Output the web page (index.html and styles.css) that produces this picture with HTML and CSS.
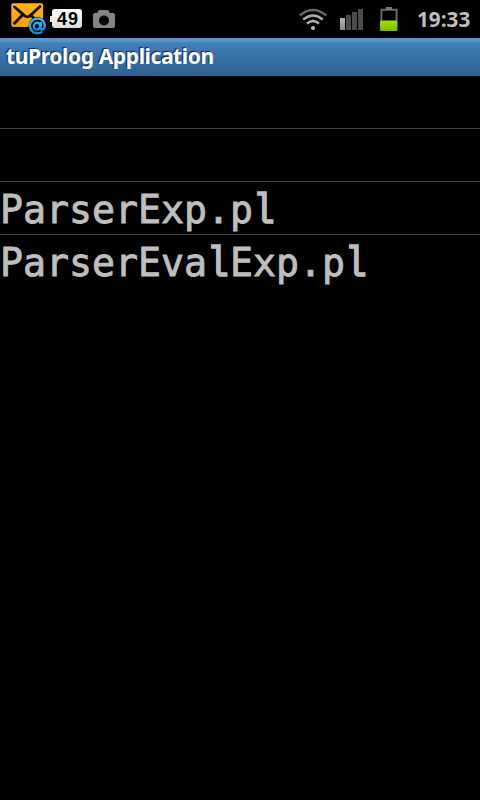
FILE: index.html
```html
<!DOCTYPE html>
<html lang="en">
<head>
<meta charset="utf-8">
<title>tuProlog Application</title>
<link rel="stylesheet" href="styles.css">
</head>
<body>
<header class="status">
  <svg class="mail" width="38" height="36" viewBox="0 0 38 36">
    <defs>
      <linearGradient id="env" x1="0" y1="0" x2="0" y2="1"><stop offset="0" stop-color="#ffb51c"/><stop offset="1" stop-color="#f79a0c"/></linearGradient>
      <linearGradient id="at" x1="0" y1="0" x2="0" y2="1"><stop offset="0" stop-color="#45b2f5"/><stop offset="1" stop-color="#1786d8"/></linearGradient>
    </defs>
    <rect x="1.3" y="3.3" width="31.8" height="23.6" rx="2" fill="url(#env)"/>
    <path d="M4.500 7L14 15.200Q17.500 18.500 20.500 15.200L30 6.500M12.500 15L4.500 23.300M20.500 15L27 21" fill="none" stroke="#151008" stroke-width="2.900" stroke-linecap="round"/>
    <circle cx="27.500" cy="25.900" r="8.900" fill="#02080d"/>
    <g fill="none" stroke="url(#at)" stroke-width="2.400" stroke-linecap="round">
      <path d="M31.500 32.200Q29.500 33.300 27 33.200A7 7 0 0 1 20 26A7.500 7.500 0 0 1 27.800 18.600A6.900 6.900 0 0 1 34.800 25.300C34.800 28 33.200 29.500 31.800 29.500Q30 29.500 30.400 27.200L31 23"/>
      <ellipse cx="27" cy="26.100" rx="3.100" ry="3.500" transform="rotate(20 27 26)"/>
    </g>
  </svg>
  <span class="level">49</span>
  <svg class="camera" width="24" height="20" viewBox="0 0 24 20">
    <path fill="#858585" fill-rule="evenodd" d="M7 1h9l2 3h3q2 0 2 2v11q0 2-2 2H3q-2 0-2-2V6q0-2 2-2h2zM12 6.500a5 5 0 1 0 0 10a5 5 0 0 0 0-10z"/>
  </svg>
  <span class="gap"></span>
  <svg class="wifi" width="30" height="24" viewBox="0 0 30 24" fill="none" stroke-width="2.300" stroke-linecap="butt">
    <path d="M1.700 7.400Q15-3.500 28.300 7.400" stroke="#666"/>
    <path d="M5.200 11.500Q15 3.500 24.800 11.500" stroke="#aaa"/>
    <path d="M9 15.600Q15 10.500 21 15.600" stroke="#b8b8b8"/>
    <circle cx="15" cy="20" r="2.100" fill="#b8b8b8"/>
  </svg>
  <svg class="signal" width="24" height="22" viewBox="0 0 24 22">
    <defs><linearGradient id="bar" x1="0" y1="0" x2="0" y2="1"><stop offset="0" stop-color="#b5b5b5"/><stop offset="1" stop-color="#888"/></linearGradient></defs>
    <path fill="url(#bar)" d="M0 9h5v12H0z"/>
    <path fill="#4b4b4b" d="M6 6h5v15H6zM12 3h5v18h-5zM18 0h5v21h-5z"/>
  </svg>
  <svg class="battery" width="20" height="26" viewBox="0 0 20 26">
    <defs><linearGradient id="charge" x1="0" y1="0" x2="0" y2="1"><stop offset="0" stop-color="#a2df00"/><stop offset="1" stop-color="#79ba00"/></linearGradient></defs>
    <path d="M2.400 15V3.800H17.600V15" fill="none" stroke="#6c6c6c" stroke-width="1.900"/>
    <path fill="#777" d="M7 1h6v3H7z"/>
    <rect x="1" y="14.500" width="17.500" height="10.500" rx="1.500" fill="url(#charge)"/>
  </svg>
  <time class="clock">19:33</time>
</header>
<h1 class="title">tuProlog Application</h1>
<ul class="files">
  <li></li>
  <li></li>
  <li>ParserExp.p<span class="slab">l</span></li>
  <li>ParserEva<span class="slab">l</span>Exp.p<span class="slab">l</span></li>
</ul>
</body>
</html>
```
FILE: styles.css
```css
* { box-sizing: border-box; }
body { margin: 0; background: #000; color: #bebebe; height: 800px; overflow: hidden; }
.status { height: 38px; display: flex; align-items: flex-start; padding: 0 9px 0 10px; background: #000; }
.status svg { display: block; flex: none; }
.level {
  position: relative;
  width: 30px; height: 19px; margin: 9px 0 0 4px;
  border-radius: 3px;
  background: linear-gradient(#fff, #dcdcdc);
  color: #000;
  font: bold 18px/20px "Liberation Sans", sans-serif;
  letter-spacing: 1px;
  padding-left: 5px;
}
.level::before {
  content: "";
  position: absolute; left: -2px; top: 7px;
  width: 3px; height: 6px;
  background: #eee;
}
.camera { margin: 9px 0 0 10px; }
.gap { flex: 1; }
.wifi { margin: 8px 12px 0 0; }
.signal { margin: 9px 15px 0 0; }
.battery { margin: 6px 18px 0 0; }
.clock { font: bold 20.7px/38px "Open Sans", sans-serif; color: #bebebe; width: 54px; white-space: nowrap; }
.title {
  margin: 0; height: 38px; padding-left: 6px;
  background: linear-gradient(#5b99d3 0, #5593cf 3px, #427fb9 5px, #2d6090 100%);
  color: #fff;
  font: bold 21px/37px "Noto Sans", sans-serif;
  letter-spacing: -0.37px;
  text-shadow: -1px -1px 1px #10283f;
}
.files { list-style: none; margin: 0; padding: 0; }
.files li {
  height: 53px;
  border-bottom: 1px solid #444;
  font: 38.2px/56px "DejaVu Sans Mono", monospace;
  -webkit-text-stroke: 0.9px #bebebe;
  white-space: nowrap;
}
.files li:last-child { border-bottom: 0; }
.slab {
  display: inline-block;
  width: 23px;
  font-family: "Liberation Mono", monospace;
  font-size: 36px;
  line-height: 1;
  transform: scaleY(1.16);
  transform-origin: 0 83%;
  -webkit-text-stroke-width: 1.5px;
}
```
